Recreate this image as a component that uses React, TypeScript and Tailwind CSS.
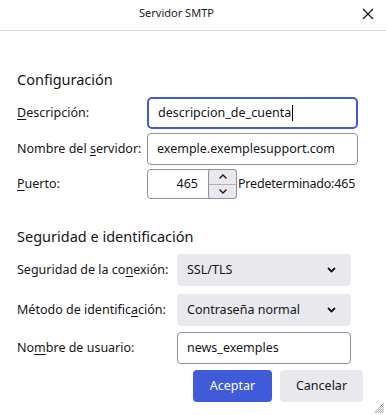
import React from "react";

const font = { fontFamily: '"Noto Sans", "Open Sans", sans-serif' };

function U({ children }: { children: React.ReactNode }) {
  return <span className="underline underline-offset-2">{children}</span>;
}

function Chevron() {
  return (
    <svg width="11" height="10" viewBox="0 0 11 10" fill="none">
      <path d="M2.5 3.5 L5.5 6.5 L8.5 3.5" stroke="#15141a" strokeWidth="1.8" strokeLinecap="round" strokeLinejoin="round" />
    </svg>
  );
}

export default function App() {
  return (
    <div className="w-[386px] h-[415px] bg-white text-[#15141a] relative overflow-hidden flex flex-col" style={font}>
      <div className="h-[31px] border-b border-[#d8d8d8] flex items-center justify-center relative shrink-0 pr-[33px]">
        <span className="text-[11px] text-[#1a1a1a] -mt-[3px]">Servidor SMTP</span>
        <svg className="absolute left-[362px] top-[8px]" width="12" height="12" viewBox="0 0 12 12">
          <path d="M1 1 L11 11 M11 1 L1 11" stroke="#1a1a1a" strokeWidth="1.3" />
        </svg>
      </div>

      <div className="flex flex-col pl-[17px]">
        <div className="mt-[39px] h-[20px] flex items-center text-[14.5px]">Configuración</div>

        <div className="mt-[7px] flex flex-col gap-[4px] text-[12.5px]">
          <div className="flex items-center h-[32px]">
            <div className="w-[130px]"><U>D</U>escripción:</div>
            <div className="w-[211px] h-[32px] border-2 border-[#3f5bd9] rounded-[5px] flex items-center pl-[9px]">
              descripcion_de_cuenta<span className="inline-block w-px h-[16px] bg-black ml-px"></span>
            </div>
          </div>
          <div className="flex items-center h-[32px]">
            <div className="w-[130px]">Nombre del <U>s</U>ervidor:</div>
            <div className="w-[211px] h-[32px] border border-[#8f8f9d] rounded-[4px] flex items-center pl-[9px]">
              exemple.exemplesupport.com
            </div>
          </div>
          <div className="flex items-center h-[30px]">
            <div className="w-[130px]"><U>P</U>uerto:</div>
            <div className="w-[90px] h-[30px] border border-[#8f8f9d] rounded-[4px] flex items-stretch">
              <div className="flex-1 flex items-center justify-end pr-[10px]">465</div>
              <div className="w-[29px] -my-px -mr-px border border-[#8f8f9d] rounded-[3px] bg-[#e9e9ed] flex flex-col">
                <div className="flex-1 flex items-center justify-center border-b border-[#b0b0b8]">
                  <svg width="10" height="7" viewBox="0 0 10 7"><path d="M1.5 5.5 L5 2 L8.5 5.5" stroke="#15141a" strokeWidth="1.3" fill="none" /></svg>
                </div>
                <div className="flex-1 flex items-center justify-center">
                  <svg width="10" height="7" viewBox="0 0 10 7"><path d="M1.5 1.5 L5 5 L8.5 1.5" stroke="#15141a" strokeWidth="1.3" fill="none" /></svg>
                </div>
              </div>
            </div>
            <div className="ml-[1px] tracking-[-0.2px]">Predeterminado:465</div>
          </div>
        </div>

        <div className="mt-[28px] h-[20px] flex items-center text-[14.5px]">Seguridad e identificación</div>

        <div className="mt-[7px] flex flex-col text-[12.5px]">
          <div className="flex items-center h-[32px]">
            <div className="w-[160px]">Seguridad de la co<U>n</U>exión:</div>
            <div className="w-[174px] h-[32px] rounded-[4px] bg-[#e9e9ed] flex items-center justify-between pl-[10px] pr-[14px]">
              <span>SSL/TLS</span>
              <Chevron />
            </div>
          </div>
          <div className="flex items-center h-[32px] mt-[8px]">
            <div className="w-[160px]">Método de identific<U>a</U>ción:</div>
            <div className="w-[174px] h-[32px] rounded-[4px] bg-[#e9e9ed] flex items-center justify-between pl-[10px] pr-[14px]">
              <span>Contraseña normal</span>
              <Chevron />
            </div>
          </div>
          <div className="flex items-center h-[32px] mt-[6px]">
            <div className="w-[160px]">No<U>m</U>bre de usuario:</div>
            <div className="w-[174px] h-[32px] border border-[#8f8f9d] rounded-[4px] flex items-center pl-[9px]">
              news_exemples
            </div>
          </div>
        </div>

        <div className="mt-[6px] flex justify-end gap-[8px] pr-[23px] text-[12.5px]">
          <div className="w-[79px] h-[32px] rounded-[4px] bg-[#3f5bd9] text-white flex items-center justify-center">Aceptar</div>
          <div className="w-[83px] h-[32px] rounded-[4px] bg-[#e9e9ed] flex items-center justify-center">Cancelar</div>
        </div>
      </div>

      <svg className="absolute right-[1px] bottom-[1px]" width="12" height="12" viewBox="0 0 12 12">
        <path d="M11 3 L3 11 M11 5 L5 11 M11 7 L7 11 M11 9 L9 11 M11 1 L1 11" stroke="#9a9a9a" strokeWidth="0.8" />
      </svg>
    </div>
  );
}
